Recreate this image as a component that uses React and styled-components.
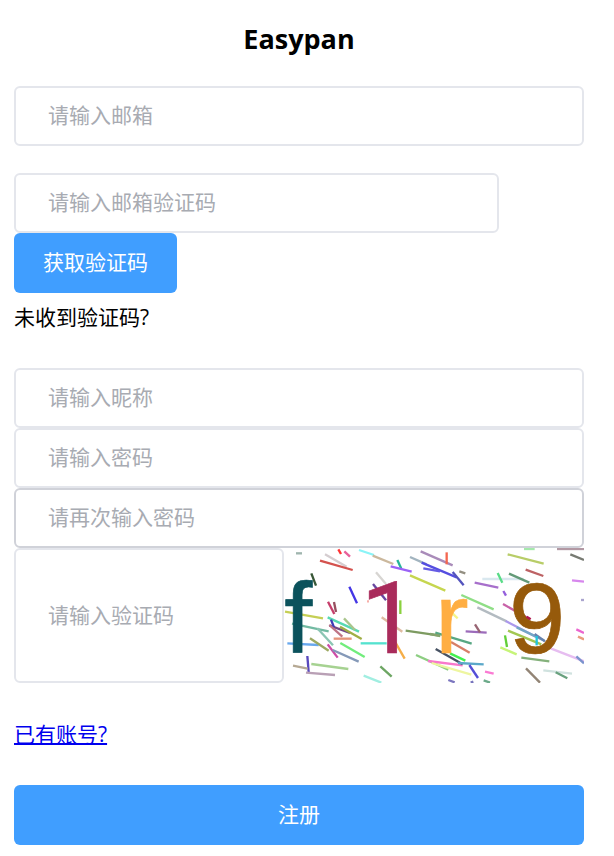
import React from "react";
import styled, { createGlobalStyle } from "styled-components";

const GlobalStyle = createGlobalStyle`
  *, *::before, *::after { box-sizing: border-box; }
  body {
    margin: 0;
    background: #fff;
    color: #000;
    font-family: "Open Sans", "Noto Sans CJK SC", sans-serif;
    font-size: 21px;
    line-height: 30px;
  }
`;

const Page = styled.main`
  padding: 20px 30px 11px 14px;
`;

const Title = styled.h1`
  margin: 0 0 28px;
  font-size: 27px;
  line-height: 38px;
  font-weight: 700;
  text-align: center;
`;

const Form = styled.form`
  display: flex;
  flex-direction: column;
`;

const EmailCode = styled.div`
  display: flex;
  flex-direction: column;
  align-items: flex-start;
  margin: 27px 0 36px;
`;

const Fields = styled.div`
  display: flex;
  flex-direction: column;
`;

const Field = styled.input`
  display: block;
  width: ${(p) => p.$width || "100%"};
  min-width: 0;
  height: 60px;
  padding: 0 32px 2px;
  border: 2px solid ${(p) => p.$border || "#e4e6ec"};
  border-radius: 6px;
  outline: none;
  background: #fff;
  color: #606266;
  font: inherit;

  &::placeholder {
    color: #a8abb2;
    opacity: 1;
  }
  &:focus { border-color: #409eff; }
`;

const PrimaryButton = styled.button`
  height: 60px;
  padding: 0 29px 2px;
  border: 0;
  border-radius: 6px;
  background: #409eff;
  color: #fff;
  font: inherit;
  cursor: pointer;
`;

const Hint = styled.span`
  margin-top: 9px;
`;

const CaptchaRow = styled.div`
  display: flex;
  align-items: stretch;

  ${Field} {
    flex: 1;
    height: auto;
  }
`;

const CaptchaImage = styled.svg`
  display: block;
  flex: none;
  width: 300px;
  height: 135px;
`;

const LoginLink = styled.a`
  align-self: flex-start;
  margin: 36px 0;
  color: #0000ee;
  text-decoration: underline;
  text-decoration-thickness: 2px;
`;

// Noise strokes: x1, y1, x2, y2, colour
const strokes = [
  [48, 40, 66, 40, "#9fb5ae"], [135, 43, 200, 80, "#d5cdd0"],
  [120, 62, 218, 90, "#d4524e"], [175, 28, 183, 42, "#ff3434"],
  [193, 34, 210, 50, "#e8609a"], [237, 30, 282, 45, "#8af4f7"],
  [278, 47, 340, 72, "#cbb89d"], [352, 60, 364, 86, "#26b59a"],
  [332, 79, 395, 95, "#9b62f6"], [390, 51, 440, 73, "#a2b4bf"],
  [422, 34, 518, 76, "#a98bb9"], [425, 68, 530, 112, "#554ee0"],
  [430, 85, 480, 94, "#655ce4"], [390, 106, 496, 152, "#c6d64f"],
  [94, 100, 108, 137, "#385737"], [208, 140, 231, 190, "#4436e5"],
  [288, 97, 318, 132, "#d7d5d2"], [279, 132, 318, 181, "#67479f"],
  [361, 181, 361, 222, "#8bd13f"], [144, 185, 163, 222, "#c63e6b"],
  [162, 186, 168, 216, "#985060"], [15, 215, 129, 235, "#c5cf55"],
  [36, 251, 146, 274, "#72baa2"], [143, 232, 237, 275, "#57d9b2"],
  [148, 256, 210, 279, "#734784"], [153, 239, 162, 262, "#413cb6"],
  [148, 255, 187, 290, "#bf7485"], [192, 235, 225, 270, "#a9c58c"],
  [180, 260, 245, 297, "#a0ae45"], [112, 265, 159, 316, "#8bc5b3"],
  [161, 296, 215, 296, "#e5947b"], [22, 310, 116, 315, "#68a8ee"],
  [90, 295, 146, 332, "#9ca962"], [143, 313, 173, 353, "#cd4ba7"],
  [158, 330, 236, 365, "#8599b8"], [181, 309, 254, 351, "#71ed7c"],
  [242, 310, 320, 310, "#55e2cf"], [305, 232, 367, 275, "#dfbba1"],
  [346, 307, 374, 356, "#f5ae48"], [82, 348, 86, 396, "#5949bd"],
  [39, 377, 83, 386, "#b6a994"], [94, 372, 205, 387, "#a6d291"],
  [78, 398, 165, 405, "#b9a0b5"], [301, 379, 335, 410, "#6da663"],
  [251, 407, 304, 428, "#a1eee1"], [261, 184, 267, 184, "#f7b0aa"],
  [377, 272, 480, 287, "#7d9b61"], [408, 345, 505, 389, "#8dce82"],
  [444, 363, 548, 376, "#f978cb"],
  [732, 27, 764, 27, "#a5e9ac"], [831, 27, 912, 27, "#b298a3"],
  [500, 37, 500, 73, "#f46750"], [683, 43, 791, 71, "#b8cd68"],
  [871, 43, 912, 60, "#777a72"], [737, 89, 790, 108, "#bd6264"],
  [607, 117, 731, 117, "#d9e8ef"], [687, 101, 748, 128, "#639a78"],
  [653, 99, 667, 128, "#59dc87"], [518, 96, 551, 136, "#5454bd"],
  [538, 94, 556, 100, "#938f82"], [584, 128, 655, 143, "#a76fcb"],
  [670, 153, 678, 167, "#945fdc"], [876, 121, 912, 125, "#d787ed"],
  [903, 180, 912, 180, "#aaa4ce"], [544, 165, 641, 208, "#8fde86"],
  [669, 192, 750, 238, "#c862a8"], [592, 202, 680, 244, "#b3bbc1"],
  [677, 243, 768, 290, "#ab98ec"], [710, 262, 793, 302, "#72a7c5"],
  [684, 272, 784, 313, "#a2c752"], [515, 218, 533, 235, "#f5f488"],
  [466, 278, 575, 311, "#57a783"], [450, 282, 481, 288, "#84a36c"],
  [557, 274, 620, 278, "#9c6bba"], [585, 253, 600, 277, "#986573"],
  [513, 306, 569, 338, "#d77e67"], [467, 327, 548, 373, "#475263"],
  [510, 340, 556, 362, "#43f04f"], [534, 369, 611, 373, "#5ba8c9"],
  [455, 369, 574, 404, "#eef6a0"], [568, 375, 594, 414, "#544fd6"],
  [615, 395, 641, 401, "#fa7bd3"], [505, 420, 524, 427, "#7c76bf"],
  [572, 428, 580, 425, "#7774bd"], [611, 421, 630, 428, "#6caa8a"],
  [675, 286, 681, 321, "#62cf37"], [661, 322, 710, 343, "#c6f478"],
  [724, 353, 808, 364, "#84b17b"], [738, 385, 780, 428, "#928475"],
  [790, 391, 876, 401, "#d0e2df"], [827, 397, 862, 415, "#69a17e"],
  [812, 325, 912, 364, "#e6bdf0"], [889, 349, 912, 370, "#7a93cd"],
  [889, 268, 912, 279, "#eb65cf"], [894, 290, 912, 298, "#e99c7e"],
  [764, 282, 795, 304, "#6782af"],
];

// Strokes that run across the front of the characters
const frontStrokes = [
  [740, 230, 752, 238, "#b0184c"],
  [770, 288, 770, 316, "#22c5df"],
];

// Character, x, colour, font
const glyphs = [
  ["f", 13, "#0b525c", "Liberation Sans, Arial, sans-serif"],
  ["1", 242, "#a92b5b", "Roboto, sans-serif"],
  ["r", 465, "#ffae42", "Liberation Sans, Arial, sans-serif"],
  ["9", 687, "#965a0b", "Liberation Sans, Arial, sans-serif"],
];

function Strokes({ items }) {
  return items.map(([x1, y1, x2, y2, c], i) => (
    <line key={i} x1={x1} y1={y1} x2={x2} y2={y2} stroke={c} strokeWidth="7" />
  ));
}

function Captcha() {
  return (
    <CaptchaImage viewBox="12 24 900 405" role="img" aria-label="f1r9">
      <Strokes items={strokes} />
      {glyphs.map(([char, x, fill, font]) => (
        <text key={char} x={x} y="339" fill={fill} stroke={fill} strokeWidth="2" fontSize="303" fontFamily={font}>
          {char}
        </text>
      ))}
      <Strokes items={frontStrokes} />
    </CaptchaImage>
  );
}

export default function App() {
  return (
    <>
      <GlobalStyle />
      <Page>
        <Title>Easypan</Title>
        <Form onSubmit={(e) => e.preventDefault()}>
          <Field type="email" aria-label="邮箱" placeholder="请输入邮箱" />
          <EmailCode>
            <Field $width="85%" type="text" aria-label="邮箱验证码" placeholder="请输入邮箱验证码" />
            <PrimaryButton type="button">获取验证码</PrimaryButton>
            <Hint>未收到验证码?</Hint>
          </EmailCode>
          <Fields>
            <Field type="text" aria-label="昵称" placeholder="请输入昵称" />
            <Field type="password" aria-label="密码" placeholder="请输入密码" />
            <Field $border="#d0d2d9" type="password" aria-label="再次输入密码" placeholder="请再次输入密码" />
            <CaptchaRow>
              <Field type="text" aria-label="验证码" placeholder="请输入验证码" />
              <Captcha />
            </CaptchaRow>
          </Fields>
          <LoginLink href="#login">已有账号?</LoginLink>
          <PrimaryButton type="submit">注册</PrimaryButton>
        </Form>
      </Page>
    </>
  );
}
